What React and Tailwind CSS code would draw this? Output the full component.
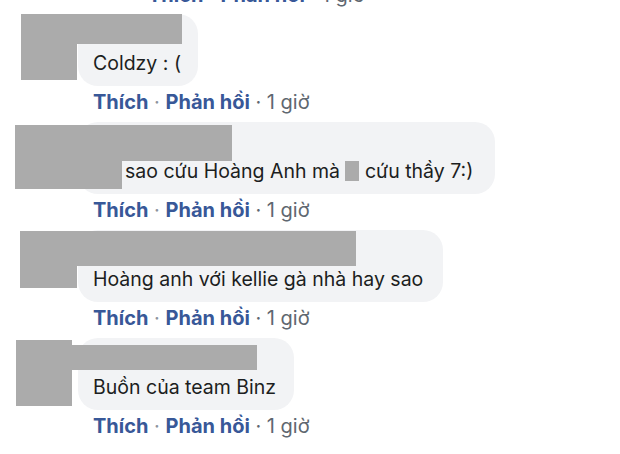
import React from 'react';

const comments = [
  {
    width: 'w-[120px]',
    text: <>Coldzy : (</>,
    indent: '',
    masks: [
      { l: 21, t: 0, w: 161, h: 30 },
      { l: 21, t: 0, w: 56, h: 66 },
    ],
  },
  {
    width: 'w-[417px]',
    text: (
      <>
        sao cứu Hoàng Anh mà{' '}
        <span className="inline-block w-[14px] h-[20px] bg-[#ababab] align-[-3px]" /> cứu thầy 7:)
      </>
    ),
    indent: 'pl-[32px]',
    masks: [
      { l: 15, t: 3, w: 217, h: 36 },
      { l: 15, t: 3, w: 107, h: 64 },
    ],
  },
  {
    width: 'w-[365px]',
    text: <>Hoàng anh với kellie gà nhà hay sao</>,
    indent: '',
    masks: [
      { l: 20, t: 1, w: 336, h: 35 },
      { l: 20, t: 1, w: 57, h: 57 },
    ],
  },
  {
    width: 'w-[216px]',
    text: <>Buồn của team Binz</>,
    indent: '',
    masks: [
      { l: 72, t: 7, w: 185, h: 25 },
      { l: 16, t: 2, w: 56, h: 66 },
    ],
  },
];

function Actions({ className = '' }) {
  return (
    <div className={`h-5 leading-5 text-[20px] ${className}`}>
      <span className="font-bold text-[#385898]">Thích</span>
      <span className="text-[#8d949e]"> · </span>
      <span className="font-bold text-[#385898]">Phản hồi</span>
      <span className="text-[#606770]"> · 1 giờ</span>
    </div>
  );
}

function Comment({ c }) {
  return (
    <div className="relative">
      <div className={`ml-[78px] ${c.width} rounded-[20px] bg-[#f2f3f5] px-[15px] py-[10px] text-[19.5px] leading-[26px] text-[#1c1e21]`}>
        <div className="h-[26px]" />
        <div className={`whitespace-nowrap ${c.indent}`}>{c.text}</div>
      </div>
      {c.masks.map((m, i) => (
        <div
          key={i}
          className="absolute bg-[#ababab]"
          style={{ left: m.l, top: m.t, width: m.w, height: m.h }}
        />
      ))}
      <Actions className="mt-[6px] mb-[10px] ml-[93px]" />
    </div>
  );
}

export default function App() {
  return (
    <div className="w-[620px] h-[454px] overflow-hidden bg-white" style={{ fontFamily: 'Inter, "Liberation Sans", Arial, sans-serif' }}>
      <Actions className="mt-[-15px] mb-[9px] ml-[148px]" />
      {comments.map((c, i) => (
        <Comment key={i} c={c} />
      ))}
    </div>
  );
}
